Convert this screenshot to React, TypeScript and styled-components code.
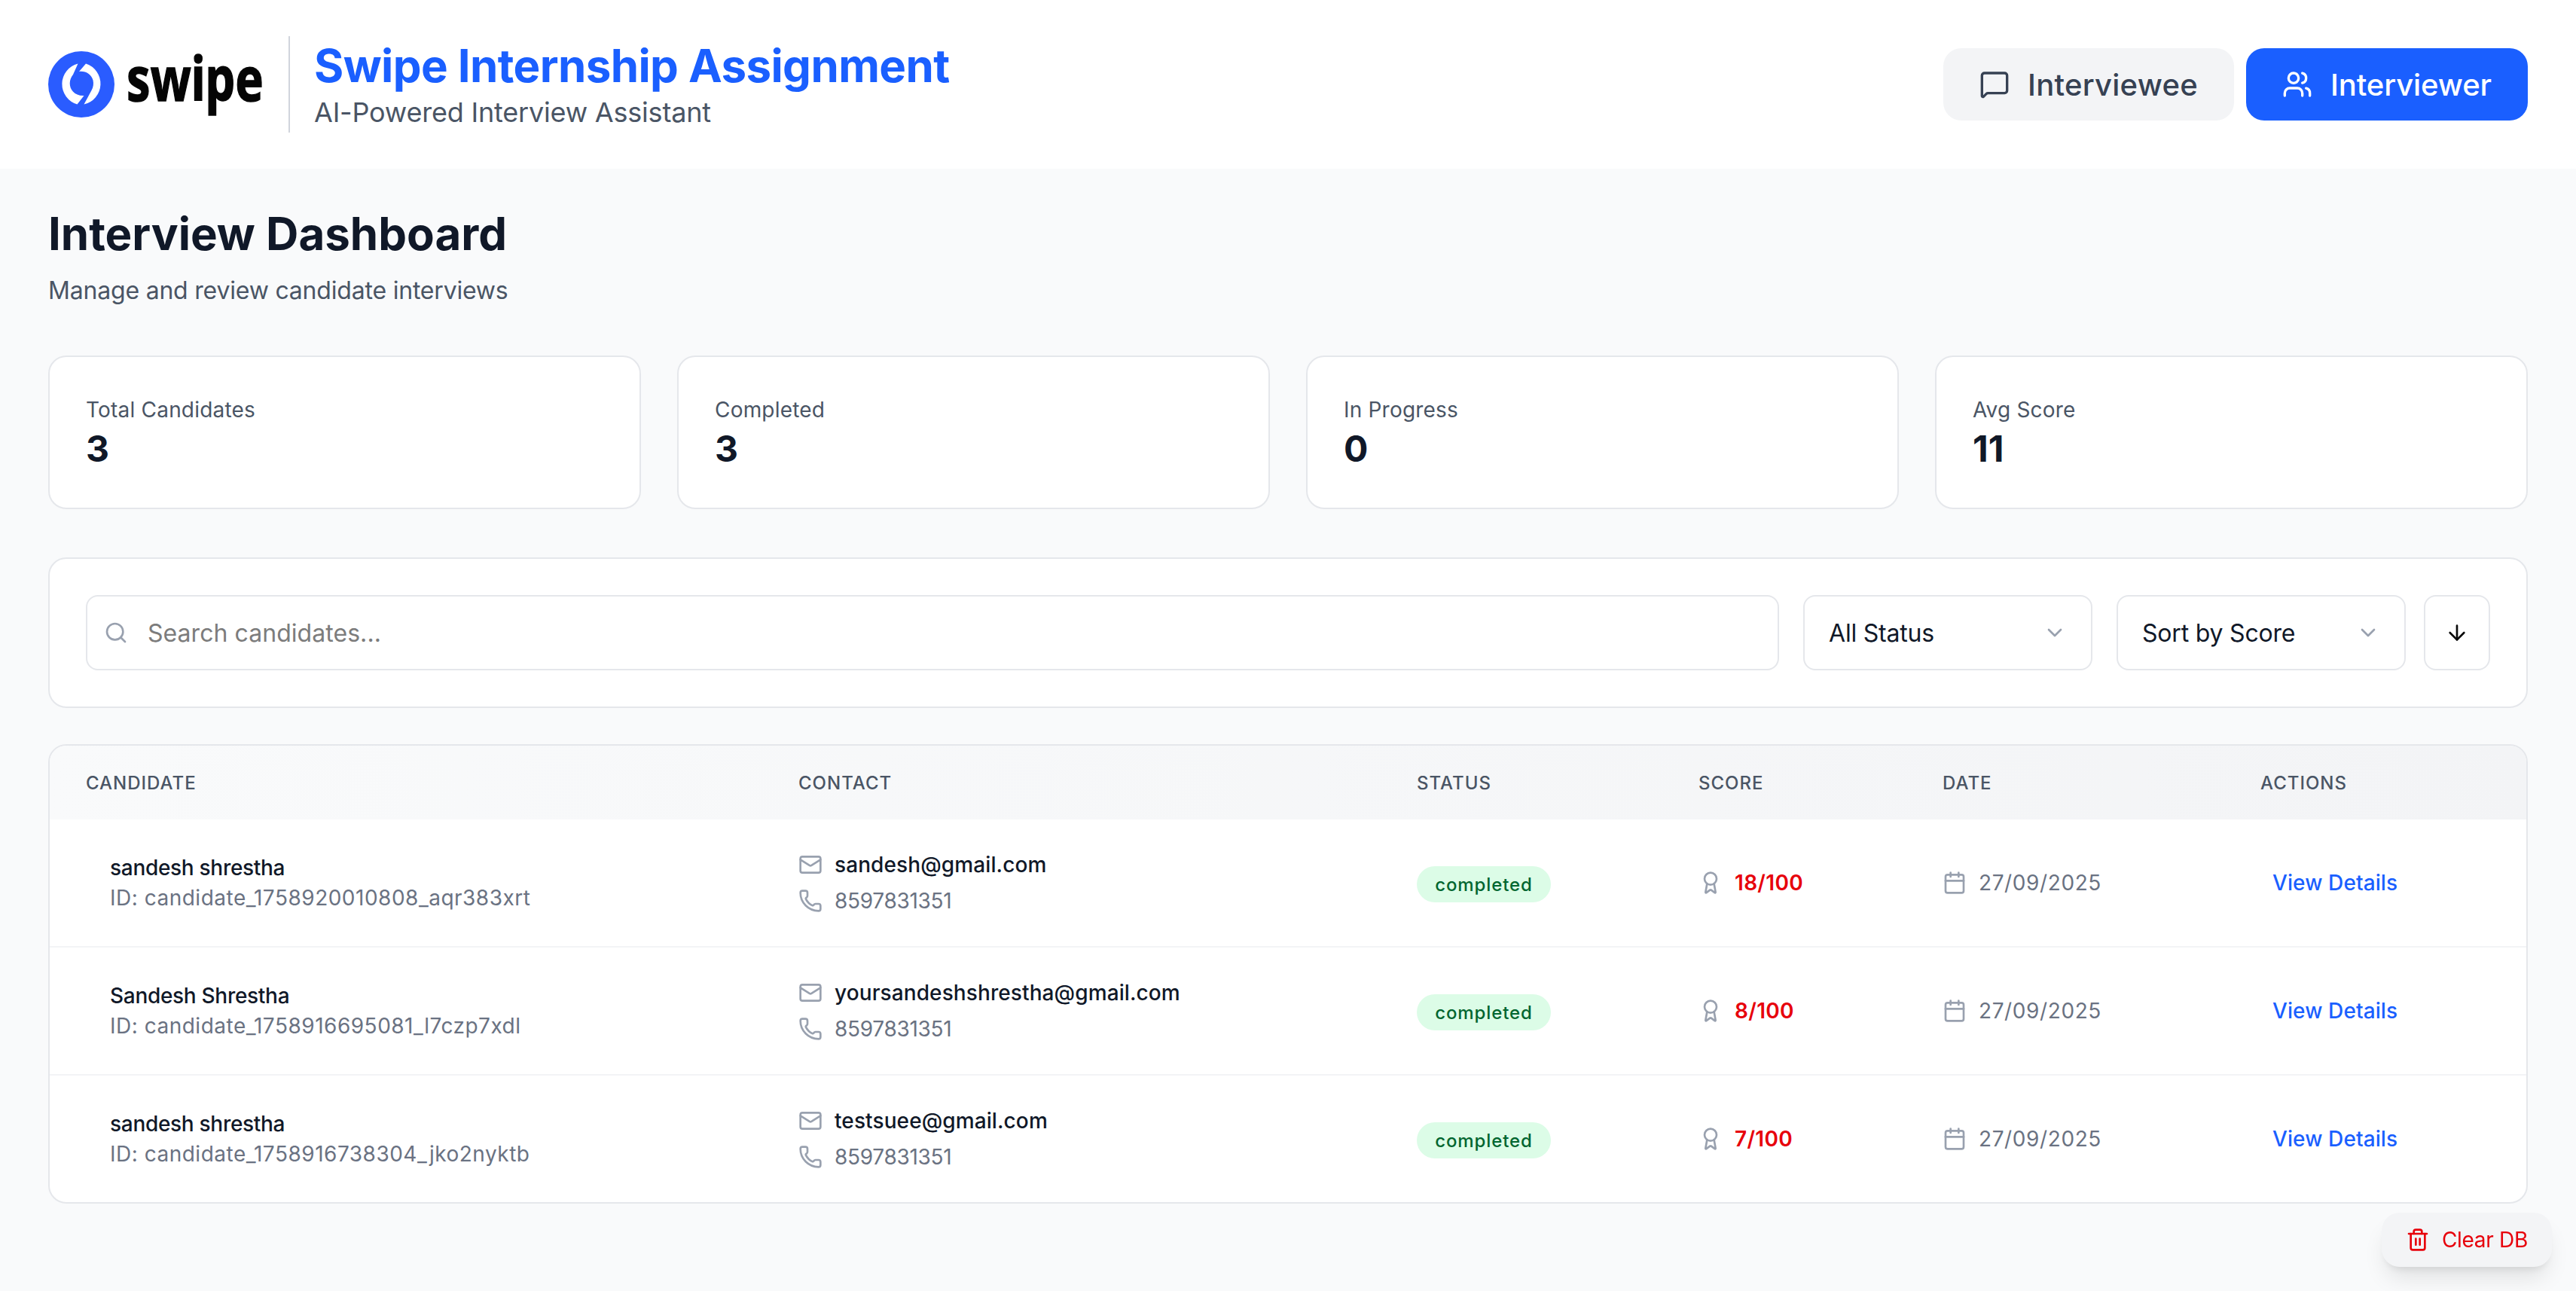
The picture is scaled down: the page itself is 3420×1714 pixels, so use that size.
import React from "react";
import styled, { createGlobalStyle } from "styled-components";
import {
  ArrowDown,
  Award,
  Calendar,
  ChevronDown,
  Mail,
  MessageSquare,
  Phone,
  Search,
  Trash2,
  Users,
} from "lucide-react";

const candidates = [
  {
    name: "sandesh shrestha",
    id: "candidate_1758920010808_aqr383xrt",
    email: "sandesh@gmail.com",
    phone: "8597831351",
    score: "18/100",
    date: "27/09/2025",
  },
  {
    name: "Sandesh Shrestha",
    id: "candidate_1758916695081_l7czp7xdl",
    email: "yoursandeshshrestha@gmail.com",
    phone: "8597831351",
    score: "8/100",
    date: "27/09/2025",
  },
  {
    name: "sandesh shrestha",
    id: "candidate_1758916738304_jko2nyktb",
    email: "testsuee@gmail.com",
    phone: "8597831351",
    score: "7/100",
    date: "27/09/2025",
  },
];

const stats = [
  { label: "Total Candidates", value: "3" },
  { label: "Completed", value: "3" },
  { label: "In Progress", value: "0" },
  { label: "Avg Score", value: "11" },
];

const columns = ["Candidate", "Contact", "Status", "Score", "Date", "Actions"];

export default function App() {
  return (
    <>
      <GlobalStyle />
      <Header>
        <Brand>
          <LogoMark viewBox="0 0 88 88">
            <circle cx="44" cy="44" r="44" fill="#2a5cff" />
            <path
              d="M39.5 16.5 A28 28 0 0 0 38.5 70.5 L47.5 59 C35 59.5 28.5 51 28.7 42.5 C28.8 38 30.5 34 33 31 Z"
              fill="#fff"
            />
            <path
              d="M50 16.5 A28 28 0 0 1 47.5 70.5 L57.5 52 C60 47.5 60.5 43 59.5 38.5 C57.5 31 50 26 41 27 Z"
              fill="#fff"
            />
          </LogoMark>
          <LogoWord viewBox="0 0 184 88">
            <text
              x="0"
              y="66"
              fontFamily="'Noto Sans', sans-serif"
              fontWeight="700"
              fontSize="80"
              fill="#050505"
              stroke="#050505"
              strokeWidth="1.5"
              textLength="182"
              lengthAdjust="spacingAndGlyphs">
              swipe
            </text>
          </LogoWord>
          <Divider />
          <div>
            <BrandTitle>Swipe Internship Assignment</BrandTitle>
            <BrandSubtitle>AI-Powered Interview Assistant</BrandSubtitle>
          </div>
        </Brand>
        <HeaderButtons>
          <TabButton>
            <MessageSquare size={40} strokeWidth={2} />
            Interviewee
          </TabButton>
          <TabButton $active>
            <Users size={40} strokeWidth={2} />
            Interviewer
          </TabButton>
        </HeaderButtons>
      </Header>

      <Main>
        <PageTitle>Interview Dashboard</PageTitle>
        <PageSubtitle>Manage and review candidate interviews</PageSubtitle>

        <StatGrid>
          {stats.map((stat) => (
            <StatCard key={stat.label}>
              <StatLabel>{stat.label}</StatLabel>
              <StatValue>{stat.value}</StatValue>
            </StatCard>
          ))}
        </StatGrid>

        <FilterCard>
          <SearchBox>
            <Search size={32} strokeWidth={2} color="#99a1af" />
            <SearchInput placeholder="Search candidates..." />
          </SearchBox>
          <SelectBox>
            All Status
            <ChevronDown size={32} strokeWidth={2} color="#99a1af" />
          </SelectBox>
          <SelectBox>
            Sort by Score
            <ChevronDown size={32} strokeWidth={2} color="#99a1af" />
          </SelectBox>
          <SortButton>
            <ArrowDown size={32} strokeWidth={2} color="#0a0a0a" />
          </SortButton>
        </FilterCard>

        <TableCard>
          <TableHead>
            {columns.map((column) => (
              <HeadCell key={column}>{column}</HeadCell>
            ))}
          </TableHead>
          {candidates.map((candidate) => (
            <TableRow key={candidate.id}>
              <NameCell>
                <Primary>{candidate.name}</Primary>
                <IdText>ID: {candidate.id}</IdText>
              </NameCell>
              <ContactCell>
                <IconLine>
                  <Mail size={32} strokeWidth={2} color="#99a1af" />
                  <EmailText>{candidate.email}</EmailText>
                </IconLine>
                <IconLine>
                  <Phone size={32} strokeWidth={2} color="#99a1af" />
                  <Secondary>{candidate.phone}</Secondary>
                </IconLine>
              </ContactCell>
              <Cell>
                <StatusBadge>completed</StatusBadge>
              </Cell>
              <Cell>
                <IconLine>
                  <Award size={32} strokeWidth={2} color="#99a1af" />
                  <ScoreText>{candidate.score}</ScoreText>
                </IconLine>
              </Cell>
              <Cell>
                <IconLine>
                  <Calendar size={32} strokeWidth={2} color="#99a1af" />
                  <DateText>{candidate.date}</DateText>
                </IconLine>
              </Cell>
              <Cell>
                <DetailsLink>View Details</DetailsLink>
              </Cell>
            </TableRow>
          ))}
        </TableCard>
      </Main>

      <ClearButton>
        <Trash2 size={32} strokeWidth={2} />
        Clear DB
      </ClearButton>
    </>
  );
}

const GlobalStyle = createGlobalStyle`
  * {
    box-sizing: border-box;
  }
  body {
    margin: 0;
    min-height: 100vh;
    background: #f9fafb;
    color: #101828;
    font-family: "Inter", "Liberation Sans", sans-serif;
  }
`;

const Header = styled.header`
  height: 224px;
  padding: 0 64px;
  background: #ffffff;
  display: flex;
  justify-content: space-between;
  align-items: center;
`;

const Brand = styled.div`
  display: flex;
  align-items: center;
`;

const LogoMark = styled.svg`
  width: 88px;
  height: 88px;
`;

const LogoWord = styled.svg`
  width: 184px;
  height: 88px;
  margin-left: 16px;
  overflow: visible;
`;

const Divider = styled.div`
  width: 2px;
  height: 128px;
  margin: 0 32px 0 31px;
  background: #d1d5dc;
`;

const BrandTitle = styled.h1`
  margin: 0;
  font-size: 60px;
  line-height: 72px;
  font-weight: 700;
  letter-spacing: -0.6px;
  color: #1a5fff;
`;

const BrandSubtitle = styled.p`
  margin: 2px 0 0;
  font-size: 36px;
  line-height: 48px;
  letter-spacing: -0.2px;
  color: #4a5565;
`;

const HeaderButtons = styled.div`
  display: flex;
  gap: 16px;
`;

const TabButton = styled.button<{ $active?: boolean }>`
  height: 96px;
  padding: 0 48px;
  border: none;
  border-radius: 24px;
  display: flex;
  align-items: center;
  gap: 24px;
  font-family: inherit;
  font-size: 40px;
  font-weight: 500;
  letter-spacing: ${(props) => (props.$active ? "-0.1px" : "0.25px")};
  background: ${(props) => (props.$active ? "#1a5fff" : "#f3f4f6")};
  color: ${(props) => (props.$active ? "#ffffff" : "#364153")};
`;

const Main = styled.main`
  padding: 50px 64px 64px;
`;

const PageTitle = styled.h2`
  margin: 0;
  font-size: 60px;
  line-height: 72px;
  font-weight: 700;
  letter-spacing: 0;
  color: #101828;
`;

const PageSubtitle = styled.p`
  margin: 16px 0 62px;
  font-size: 32px;
  line-height: 48px;
  letter-spacing: -0.2px;
  color: #4a5565;
`;

const StatGrid = styled.div`
  display: grid;
  grid-template-columns: repeat(4, 1fr);
  gap: 48px;
  margin-bottom: 64px;
`;

const StatCard = styled.div`
  height: 204px;
  padding: 50px 48px 46px;
  background: #ffffff;
  border: 2px solid #e5e7eb;
  border-radius: 24px;
`;

const StatLabel = styled.div`
  font-size: 28px;
  line-height: 40px;
  letter-spacing: 0.2px;
  color: #4a5565;
`;

const StatValue = styled.div`
  font-size: 48px;
  line-height: 64px;
  font-weight: 700;
  color: #101828;
`;

const FilterCard = styled.div`
  height: 200px;
  padding: 48px;
  margin-bottom: 48px;
  background: #ffffff;
  border: 2px solid #e5e7eb;
  border-radius: 24px;
  display: flex;
  align-items: center;
`;

const SearchBox = styled.div`
  flex: 1;
  height: 100px;
  margin-right: 32px;
  padding-left: 22px;
  border: 2px solid #e5e7eb;
  border-radius: 16px;
  display: flex;
  align-items: center;
  gap: 26px;
`;

const SearchInput = styled.input`
  flex: 1;
  border: none;
  outline: none;
  padding: 0;
  background: transparent;
  font-family: inherit;
  font-size: 32px;
  letter-spacing: 0.05px;
  &::placeholder {
    color: #7c7c7c;
    opacity: 1;
  }
`;

const SelectBox = styled.div`
  width: 384px;
  height: 100px;
  margin-right: 32px;
  padding: 0 32px;
  border: 2px solid #e5e7eb;
  border-radius: 16px;
  display: flex;
  align-items: center;
  justify-content: space-between;
  font-size: 32px;
  letter-spacing: -0.2px;
  color: #101828;
  & + & {
    margin-right: 24px;
  }
`;

const SortButton = styled.button`
  width: 88px;
  height: 100px;
  padding: 0;
  background: #ffffff;
  border: 2px solid #e5e7eb;
  border-radius: 16px;
  display: flex;
  align-items: center;
  justify-content: center;
`;

const TableCard = styled.div`
  background: #ffffff;
  border: 2px solid #e5e7eb;
  border-radius: 24px;
  overflow: hidden;
`;

const gridColumns = "946px 821px 374px 324px 422px 1fr";

const TableHead = styled.div`
  height: 98px;
  display: grid;
  grid-template-columns: ${gridColumns};
  align-items: center;
  background: linear-gradient(to right, #f9fafb, #f3f4f6);
`;

const HeadCell = styled.div`
  padding-left: 48px;
  font-size: 24px;
  font-weight: 500;
  letter-spacing: 1px;
  text-transform: uppercase;
  color: #4a5565;
`;

const TableRow = styled.div`
  height: 170px;
  display: grid;
  grid-template-columns: ${gridColumns};
  align-items: center;
  border-bottom: 2px solid #f3f4f6;
  &:last-child {
    height: 168px;
    border-bottom: none;
  }
`;

const Cell = styled.div`
  padding-left: 48px;
`;

const NameCell = styled(Cell)`
  padding-left: 80px;
`;

const ContactCell = styled(Cell)`
  display: flex;
  flex-direction: column;
  gap: 8px;
`;

const Primary = styled.div`
  font-size: 28px;
  line-height: 40px;
  font-weight: 500;
  letter-spacing: -0.3px;
  color: #101828;
`;

const EmailText = styled(Primary)`
  letter-spacing: 0.1px;
`;

const Secondary = styled.div`
  font-size: 28px;
  line-height: 40px;
  letter-spacing: -0.3px;
  color: #6a7282;
`;

const IdText = styled(Secondary)`
  letter-spacing: 0.5px;
`;

const DateText = styled(Secondary)`
  letter-spacing: 0.6px;
`;

const IconLine = styled.div`
  display: flex;
  align-items: center;
  gap: 16px;
`;

const StatusBadge = styled.span`
  display: flex;
  align-items: center;
  justify-content: center;
  width: 178px;
  height: 48px;
  margin-top: 4px;
  border-radius: 24px;
  background: #dcfce7;
  font-size: 24px;
  font-weight: 500;
  letter-spacing: 0.9px;
  color: #016630;
`;

const ScoreText = styled.span`
  font-size: 28px;
  font-weight: 600;
  letter-spacing: 0.3px;
  color: #e7000b;
`;

const DetailsLink = styled.a`
  margin-left: 16px;
  font-size: 28px;
  font-weight: 500;
  letter-spacing: 0.1px;
  color: #1a5fff;
`;

const ClearButton = styled.button`
  position: fixed;
  right: 32px;
  bottom: 32px;
  height: 72px;
  padding: 0 32px;
  border: none;
  border-radius: 24px;
  display: flex;
  align-items: center;
  gap: 16px;
  background: #f3f4f6;
  box-shadow: 0 20px 30px -6px rgba(0, 0, 0, 0.1), 0 8px 12px -6px rgba(0, 0, 0, 0.1);
  font-family: inherit;
  font-size: 28px;
  letter-spacing: -0.3px;
  color: #e7000b;
`;
